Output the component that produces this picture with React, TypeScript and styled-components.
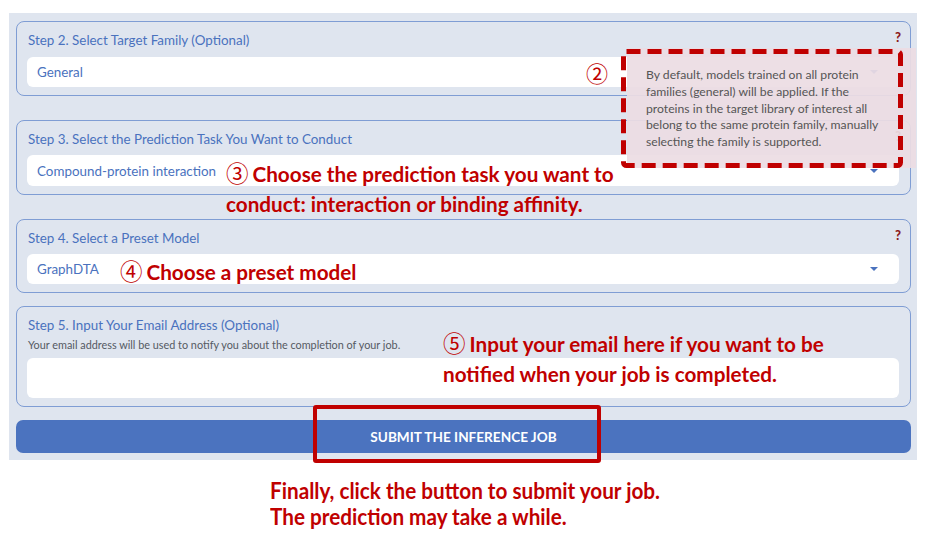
import React from "react";
import styled, { createGlobalStyle } from "styled-components";

const GlobalStyle = createGlobalStyle`
  html, body { margin: 0; padding: 0; background: #ffffff; }
  body { font-family: Lato, "Noto Sans", sans-serif; }
  * { box-sizing: border-box; }
`;

const RED = "#c00000";
const BLUE = "#4a72be";

const Page = styled.div`
  position: relative;
  width: 932px;
  height: 536px;
  overflow: hidden;
  padding-top: 13px;
`;

const Panel = styled.div`
  margin-left: 9px;
  width: 908px;
  background: #dfe5ef;
  padding: 8px 6px 7px 7px;
  display: flex;
  flex-direction: column;
`;

const Card = styled.div<{ $gap: number }>`
  position: relative;
  margin-top: ${(p) => p.$gap}px;
  border: 1px solid #7f9dd4;
  border-radius: 8px;
  padding: 10px 11px 8px 10px;
  display: flex;
  flex-direction: column;
`;

const Label = styled.div`
  margin-left: 1px;
  font-size: 13.4px;
  line-height: 17px;
  color: ${BLUE};
`;

const Help = styled.div`
  margin-left: 1px;
  margin-top: 4px;
  font-size: 10.85px;
  line-height: 14px;
  color: #555a63;
`;

const Select = styled.div<{ $h: number; $top: number }>`
  margin-top: ${(p) => p.$top}px;
  height: ${(p) => p.$h}px;
  background: #ffffff;
  border-radius: 6px;
  padding: 0 21px 0 10px;
  display: flex;
  align-items: center;
  justify-content: space-between;
  font-size: 13.4px;
  color: ${BLUE};
`;

const Arrow = styled.span`
  width: 0;
  height: 0;
  border-left: 4px solid transparent;
  border-right: 4px solid transparent;
  border-top: 4px solid ${BLUE};
`;

const Mark = styled.span`
  position: absolute;
  top: 8px;
  right: 9px;
  font-size: 13px;
  font-weight: 900;
  color: #8c1b1b;
  line-height: 14px;
`;

const SubmitButton = styled.button`
  margin-top: 13px;
  height: 33px;
  border: none;
  border-radius: 7px;
  background: #4b73bf;
  color: #ffffff;
  font-family: Lato, "Noto Sans", sans-serif;
  font-weight: 700;
  font-size: 13.6px;
  cursor: pointer;
`;

const Tooltip = styled.div`
  position: absolute;
  left: 627px;
  top: 48px;
  width: 289px;
  height: 120px;
  background: rgba(236, 221, 227, 0.93);
  padding: 19px 10px 0 19px;
  font-size: 12.2px;
  line-height: 16.8px;
  color: #555555;
  white-space: nowrap;
`;

const DashedFrame = styled.svg`
  position: absolute;
  left: 618px;
  top: 46px;
`;

const RedFrame = styled.div`
  position: absolute;
  left: 313px;
  top: 405px;
  width: 288px;
  height: 58px;
  border: 4px solid ${RED};
  border-radius: 3px;
`;

const Callout = styled.div<{ $x: number; $y: number }>`
  position: absolute;
  left: ${(p) => p.$x}px;
  top: ${(p) => p.$y}px;
  font-size: 20.7px;
  line-height: 29.5px;
  font-weight: 700;
  color: ${RED};
  white-space: nowrap;
`;

const Num = styled.span<{ $size?: number }>`
  font-family: "Noto Sans CJK JP", "DejaVu Sans", sans-serif;
  font-weight: 400;
  font-size: ${(p) => p.$size ?? 22.5}px;
  margin-right: 4px;
`;

const Note = styled.div`
  margin: 17px 0 0 270px;
  font-size: 23px;
  line-height: 26px;
  font-weight: 700;
  color: ${RED};
  white-space: nowrap;
  transform: scaleX(0.9);
  transform-origin: left center;
`;

export default function App() {
  return (
    <>
      <GlobalStyle />
      <Page>
        <Panel>
          <Card $gap={0}>
            <Label>Step 2. Select Target Family (Optional)</Label>
            <Select $h={30} $top={8}>
              <span>General</span>
              <Arrow />
            </Select>
            <Mark>?</Mark>
          </Card>
          <Card $gap={24}>
            <Label>Step 3. Select the Prediction Task You Want to Conduct</Label>
            <Select $h={31} $top={7}>
              <span>Compound-protein interaction</span>
              <Arrow />
            </Select>
            <Mark>?</Mark>
          </Card>
          <Card $gap={24}>
            <Label>Step 4. Select a Preset Model</Label>
            <Select $h={30} $top={7}>
              <span>GraphDTA</span>
              <Arrow />
            </Select>
            <Mark>?</Mark>
          </Card>
          <Card $gap={13}>
            <Label>Step 5. Input Your Email Address (Optional)</Label>
            <Help>Your email address will be used to notify you about the completion of your job.</Help>
            <Select $h={40} $top={6} />
          </Card>
          <SubmitButton>SUBMIT THE INFERENCE JOB</SubmitButton>
        </Panel>

        <Note>
          Finally, click the button to submit your job.
          <br />
          The prediction may take a while.
        </Note>

        <Tooltip>
          By default, models trained on all protein
          <br />
          families (general) will be applied. If the
          <br />
          proteins in the target library of interest all
          <br />
          belong to the same protein family, manually
          <br />
          selecting the family is supported.
        </Tooltip>
        <DashedFrame width="286" height="125" viewBox="0 0 286 125">
          <rect
            x="5.5"
            y="5.5"
            width="277"
            height="114"
            rx="3"
            fill="none"
            stroke={RED}
            strokeWidth="5"
            strokeDasharray="14 7"
          />
        </DashedFrame>

        <Callout $x={586} $y={58}>
          <Num $size={22}>②</Num>
        </Callout>
        <Callout $x={226} $y={158}>
          <Num>③</Num>Choose the prediction task you want to
          <br />
          conduct: interaction or binding affinity.
        </Callout>
        <Callout $x={120} $y={256}>
          <Num>④</Num>Choose a preset model
        </Callout>
        <Callout $x={443} $y={328}>
          <Num>⑤</Num>Input your email here if you want to be
          <br />
          notified when your job is completed.
        </Callout>

        <RedFrame />
      </Page>
    </>
  );
}
